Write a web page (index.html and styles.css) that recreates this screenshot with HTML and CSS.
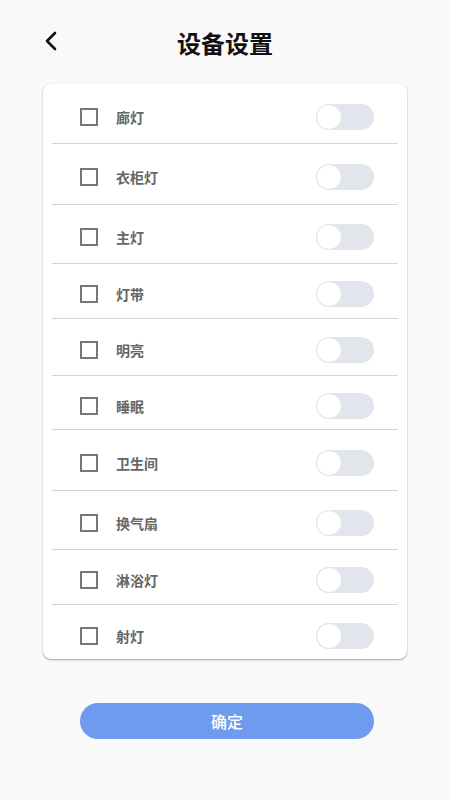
FILE: index.html
```html
<!DOCTYPE html>
<html lang="zh-CN">
<head>
    <meta charset="UTF-8">
    <meta name="viewport" content="width=device-width, initial-scale=1.0">
    <title>设备设置</title>
    <link rel="stylesheet" href="styles.css">
</head>
<body>

<div class="page">

    <!-- Header -->
    <div class="header">
        <button class="back-btn" aria-label="返回">
            <svg width="16" height="22" viewBox="0 0 16 22">
                <path d="M12 3 L4 11 L12 19" fill="none" stroke="#111" stroke-width="2.6" stroke-linecap="round" stroke-linejoin="round"/>
            </svg>
        </button>
        <h1 class="title">设备设置</h1>
    </div>

    <!-- Device List -->
    <div class="device-card">
        <div class="device-row">
            <span class="check"></span>
            <span class="device-name">廊灯</span>
            <span class="switch"><span class="knob"></span></span>
        </div>
        <div class="device-row">
            <span class="check"></span>
            <span class="device-name">衣柜灯</span>
            <span class="switch"><span class="knob"></span></span>
        </div>
        <div class="device-row">
            <span class="check"></span>
            <span class="device-name">主灯</span>
            <span class="switch"><span class="knob"></span></span>
        </div>
        <div class="device-row">
            <span class="check"></span>
            <span class="device-name">灯带</span>
            <span class="switch"><span class="knob"></span></span>
        </div>
        <div class="device-row">
            <span class="check"></span>
            <span class="device-name">明亮</span>
            <span class="switch"><span class="knob"></span></span>
        </div>
        <div class="device-row">
            <span class="check"></span>
            <span class="device-name">睡眠</span>
            <span class="switch"><span class="knob"></span></span>
        </div>
        <div class="device-row">
            <span class="check"></span>
            <span class="device-name">卫生间</span>
            <span class="switch"><span class="knob"></span></span>
        </div>
        <div class="device-row">
            <span class="check"></span>
            <span class="device-name">换气扇</span>
            <span class="switch"><span class="knob"></span></span>
        </div>
        <div class="device-row">
            <span class="check"></span>
            <span class="device-name">淋浴灯</span>
            <span class="switch"><span class="knob"></span></span>
        </div>
        <div class="device-row">
            <span class="check"></span>
            <span class="device-name">射灯</span>
            <span class="switch"><span class="knob"></span></span>
        </div>
    </div>

    <!-- Confirm -->
    <div class="footer">
        <button class="confirm-btn">确定</button>
    </div>
</div>

</body>
</html>
```

FILE: styles.css
```css
/* General */
* {
    margin: 0;
    padding: 0;
    box-sizing: border-box;
    font-family: "Noto Sans CJK SC", "Noto Sans", sans-serif;
}

body {
    background: #f9f9f9;
    color: #111;
}

.page {
    width: 450px;
    min-height: 800px;
    padding: 0 43px;
}

/* Header */
.header {
    height: 84px;
    display: flex;
    align-items: center;
    position: relative;
}

.back-btn {
    background: none;
    border: none;
    width: 16px;
    height: 22px;
    display: flex;
    margin-top: -2px;
    cursor: pointer;
}

.title {
    position: absolute;
    left: 0;
    right: 0;
    top: 27px;
    text-align: center;
    font-size: 24px;
    line-height: 32px;
    font-weight: bold;
    color: #111;
    pointer-events: none;
}

/* Device card */
.device-card {
    width: 364px;
    background: #fff;
    border-radius: 8px;
    padding: 0 9px;
    box-shadow: 0 1px 2px rgba(0, 0, 0, 0.35), 0 0 1px rgba(0, 0, 0, 0.08);
}

.device-row {
    height: 58px;
    display: flex;
    align-items: center;
    padding: 6px 24px 0 28px;
    border-bottom: 1px solid #d4d4d4;
}

.device-row:last-child {
    border-bottom: none;
}

.device-row:nth-child(1) { height: 60px; }
.device-row:nth-child(2) { height: 61px; }
.device-row:nth-child(3) { height: 59px; }
.device-row:nth-child(4) { height: 55px; }
.device-row:nth-child(5) { height: 57px; }
.device-row:nth-child(6) { height: 54px; }
.device-row:nth-child(7) { height: 61px; }
.device-row:nth-child(8) { height: 59px; }
.device-row:nth-child(9) { height: 55px; }
.device-row:nth-child(10) { height: 54px; padding-top: 8px; }

.check {
    width: 18px;
    height: 18px;
    border: 2px solid #777;
    flex-shrink: 0;
}

.device-name {
    flex: 1;
    margin-left: 18px;
    font-size: 14px;
    font-weight: bold;
    color: #666;
}

.switch {
    width: 58px;
    height: 26px;
    border-radius: 13px;
    background: #e2e6ec;
    position: relative;
}

.knob {
    position: absolute;
    left: 0;
    top: 0;
    width: 26px;
    height: 26px;
    border-radius: 50%;
    background: #fff;
    border: 1px solid #e4e4e4;
}

/* Footer */
.footer {
    padding: 44px 32px 0 37px;
}

.confirm-btn {
    width: 294px;
    height: 36px;
    border: none;
    border-radius: 18px;
    background: #6f9bef;
    color: #fff;
    font-size: 16px;
    font-weight: 500;
    cursor: pointer;
}
```
